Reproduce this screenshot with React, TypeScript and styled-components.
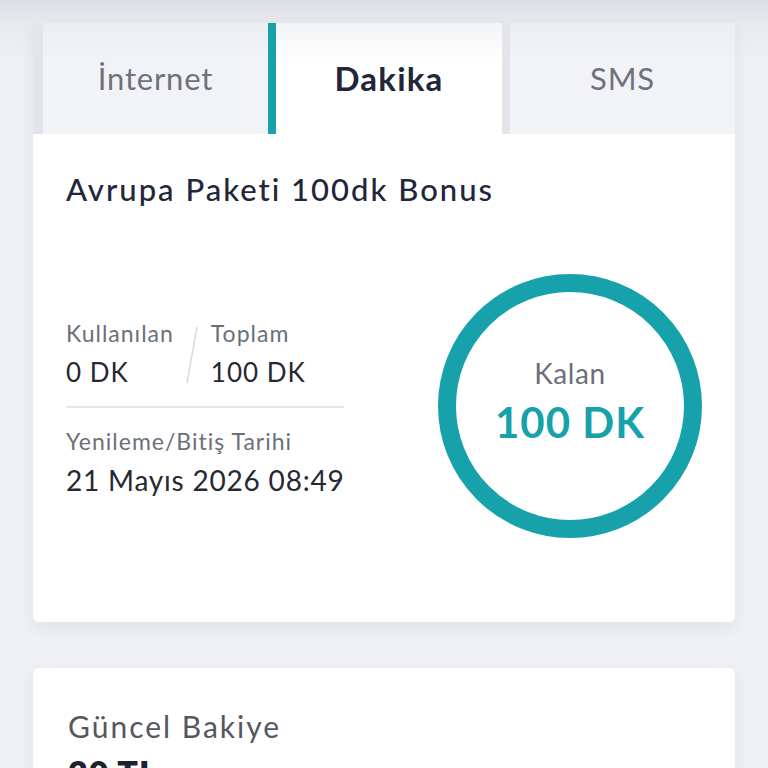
import React from "react";
import styled, { createGlobalStyle } from "styled-components";

const Global = createGlobalStyle`
  html, body { margin: 0; padding: 0; }
  body {
    background: linear-gradient(180deg, #dcdde2 0px, #e9eaee 24px, #eef0f3 60px);
    font-family: "Lato", "Noto Sans", sans-serif;
    -webkit-font-smoothing: antialiased;
  }
`;

const TEAL = "#17a1ab";

const Page = styled.div`
  padding: 23px 33px 0;
  height: 745px;
  overflow: hidden;
  display: flex;
  flex-direction: column;
  gap: 46px;
`;

const Card = styled.section`
  background: #ffffff;
  border-radius: 0 0 6px 6px;
  box-shadow: 0 6px 16px rgba(40, 44, 60, 0.06);
`;

const TabBar = styled.div`
  display: flex;
  height: 111px;
  background: #e3e5ea;
  padding-left: 10px;
`;

const Tab = styled.div<{ $active?: boolean; $w: number; $gap?: number }>`
  flex: 0 0 ${(p) => p.$w}px;
  margin-left: ${(p) => p.$gap ?? 0}px;
  box-sizing: border-box;
  display: flex;
  align-items: center;
  justify-content: center;
  font-size: ${(p) => (p.$active ? 33 : 31)}px;
  letter-spacing: ${(p) => (p.$active ? 1.2 : 0.8)}px;
  font-weight: ${(p) => (p.$active ? 700 : 400)};
  color: ${(p) => (p.$active ? "#22263a" : "#6f717c")};
  background: ${(p) =>
    p.$active
      ? "linear-gradient(180deg, #f3f4f6 0px, #ffffff 40px)"
      : "linear-gradient(180deg, #eceef1 0px, #f2f3f6 40px)"};
  border-left: ${(p) => (p.$active ? `8px solid ${TEAL}` : "none")};
  padding-bottom: 2px;
`;

const Content = styled.div`
  padding: 36px 33px 84px;
`;

const Title = styled.h2`
  margin: 0;
  font-size: 31px;
  font-weight: 500;
  color: #22263a;
  letter-spacing: 2px;
  line-height: 38px;
  white-space: nowrap;
`;

const Body = styled.div`
  display: flex;
  align-items: center;
  justify-content: space-between;
  margin-top: 66px;
`;

const Stats = styled.div`
  width: 278px;
  padding-top: 5px;
  display: flex;
  flex-direction: column;
`;

const StatRow = styled.div`
  display: flex;
  align-items: stretch;
  padding-bottom: 14px;
  border-bottom: 2px solid #e6e7eb;
`;

const Stat = styled.div`
  display: flex;
  flex-direction: column;
`;

const Slash = styled.div`
  width: 37px;
  display: flex;
  justify-content: center;
  align-items: center;
`;

const Label = styled.div`
  font-size: 23px;
  color: #6c6f7a;
  line-height: 30px;
  letter-spacing: 1px;
  white-space: nowrap;
`;

const Value = styled.div<{ $big?: boolean }>`
  font-size: ${(p) => (p.$big ? 28 : 26)}px;
  color: #262833;
  line-height: 40px;
  margin-top: 4px;
  letter-spacing: ${(p) => (p.$big ? 0.8 : 1)}px;
  white-space: nowrap;
`;

const Renewal = styled.div`
  padding-top: 18px;
  display: flex;
  flex-direction: column;
`;

const Ring = styled.div`
  position: relative;
  width: 264px;
  height: 264px;
  box-sizing: border-box;
  padding-bottom: 9px;
  display: flex;
  flex-direction: column;
  align-items: center;
  justify-content: center;
`;

const RingSvg = styled.svg`
  position: absolute;
  inset: 0;
`;

const RingLabel = styled.div`
  font-size: 28px;
  color: #6c6f7a;
  line-height: 34px;
  letter-spacing: 0.6px;
`;

const RingValue = styled.div`
  font-size: 42px;
  font-weight: 700;
  color: ${TEAL};
  line-height: 50px;
  margin-top: 7px;
  letter-spacing: 1px;
`;

const BalanceCard = styled.section`
  background: #ffffff;
  border-radius: 6px;
  box-shadow: 0 6px 16px rgba(40, 44, 60, 0.06);
  padding: 38px 35px;
  flex: 1;
`;

const BalanceLabel = styled.div`
  font-size: 30px;
  color: #55575f;
  line-height: 40px;
  letter-spacing: 2px;
`;

const BalanceValue = styled.div`
  font-size: 34px;
  font-weight: 800;
  color: #1d2030;
  line-height: 44px;
  margin-top: 5px;
  letter-spacing: 1px;
`;

export default function App() {
  return (
    <>
      <Global />
      <Page>
        <Card>
          <TabBar>
            <Tab $w={225}>İnternet</Tab>
            <Tab $w={234} $active>
              Dakika
            </Tab>
            <Tab $w={225} $gap={8}>
              SMS
            </Tab>
          </TabBar>
          <Content>
            <Title>Avrupa Paketi 100dk Bonus</Title>
            <Body>
              <Stats>
                <StatRow>
                  <Stat>
                    <Label>Kullanılan</Label>
                    <Value>0 DK</Value>
                  </Stat>
                  <Slash>
                    <svg width="14" height="58" viewBox="0 0 14 58">
                      <line x1="12" y1="1" x2="2" y2="57" stroke="#d9dade" strokeWidth="1.5" />
                    </svg>
                  </Slash>
                  <Stat>
                    <Label>Toplam</Label>
                    <Value>100 DK</Value>
                  </Stat>
                </StatRow>
                <Renewal>
                  <Label>Yenileme/Bitiş Tarihi</Label>
                  <Value $big>21 Mayıs 2026 08:49</Value>
                </Renewal>
              </Stats>
              <Ring>
                <RingSvg width="264" height="264" viewBox="0 0 264 264">
                  <circle cx="132" cy="132" r="123" fill="none" stroke={TEAL} strokeWidth="18" />
                </RingSvg>
                <RingLabel>Kalan</RingLabel>
                <RingValue>100 DK</RingValue>
              </Ring>
            </Body>
          </Content>
        </Card>
        <BalanceCard>
          <BalanceLabel>Güncel Bakiye</BalanceLabel>
          <BalanceValue>20 TL</BalanceValue>
        </BalanceCard>
      </Page>
    </>
  );
}
